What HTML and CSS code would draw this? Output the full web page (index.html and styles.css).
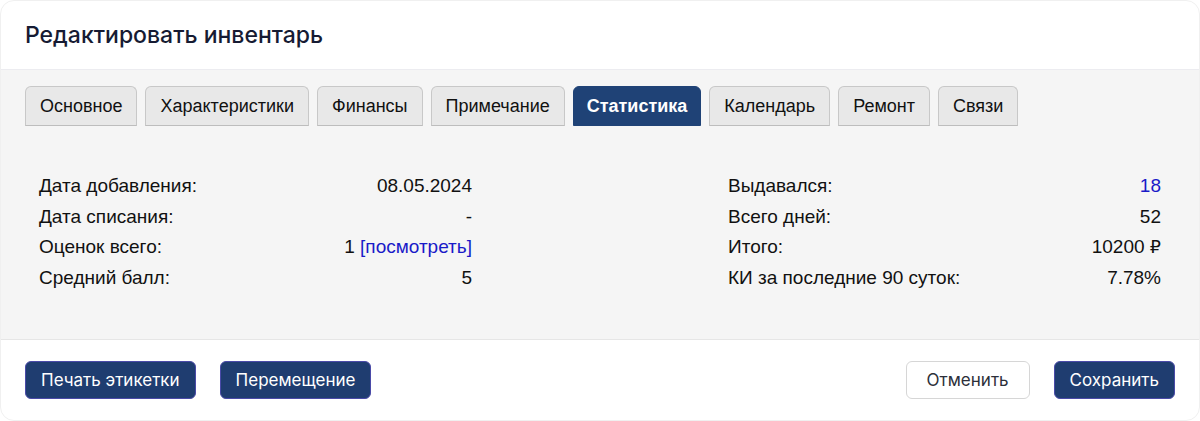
FILE: index.html
```html
<!DOCTYPE html>
<html lang="ru">
<head>
<meta charset="utf-8">
<link rel="stylesheet" href="styles.css">
</head>
<body>
<div class="modal">
  <div class="modal-header">
    <h1 class="title">Редактировать инвентарь</h1>
  </div>
  <div class="modal-body">
    <div class="tabs">
      <div class="tab">Основное</div>
      <div class="tab">Характеристики</div>
      <div class="tab">Финансы</div>
      <div class="tab">Примечание</div>
      <div class="tab active">Статистика</div>
      <div class="tab">Календарь</div>
      <div class="tab">Ремонт</div>
      <div class="tab">Связи</div>
    </div>
    <div class="stats">
      <div class="col">
        <div class="row"><span>Дата добавления:</span><span>08.05.2024</span></div>
        <div class="row"><span>Дата списания:</span><span>-</span></div>
        <div class="row"><span>Оценок всего:</span><span>1 <a class="link" href="#">[посмотреть]</a></span></div>
        <div class="row"><span>Средний балл:</span><span>5</span></div>
      </div>
      <div class="col">
        <div class="row"><span>Выдавался:</span><a class="link" href="#">18</a></div>
        <div class="row"><span>Всего дней:</span><span>52</span></div>
        <div class="row"><span>Итого:</span><span>10200 <span class="rub">₽</span></span></div>
        <div class="row"><span>КИ за последние 90 суток:</span><span>7.78%</span></div>
      </div>
    </div>
  </div>
  <div class="modal-footer">
    <div class="group">
      <button class="btn primary">Печать этикетки</button>
      <button class="btn primary">Перемещение</button>
    </div>
    <div class="group">
      <button class="btn secondary">Отменить</button>
      <button class="btn primary">Сохранить</button>
    </div>
  </div>
</div>
</body>
</html>
```

FILE: styles.css
```css
* { box-sizing: border-box; }
html, body { margin: 0; padding: 0; background: #fff; }
body { width: 1200px; height: 421px; overflow: hidden; }

.modal {
  width: 1200px;
  height: 421px;
  background: #fff;
  border-radius: 14px;
  display: flex;
  flex-direction: column;
  overflow: hidden;
  border: 1px solid #f0f0f0;
}

.modal-header {
  height: 69px;
  padding: 0 24px;
  display: flex;
  align-items: center;
  border-bottom: 1px solid #ececf0;
}
.title {
  margin: 0;
  font-family: Inter, "Liberation Sans", sans-serif;
  font-weight: 500;
  font-size: 23px;
  color: #161b33;
}

.modal-body {
  background: #f5f5f5;
  height: 270px;
  padding: 16px 24px 0;
  border-bottom: 1px solid #e6e6e6;
}

.tabs {
  display: flex;
  gap: 8px;
}
.tab {
  height: 40px;
  padding: 0 14px;
  display: flex;
  align-items: center;
  background: #e8e8e8;
  border: 1px solid #c8c8c8;
  border-bottom-color: #bdbdbd;
  border-radius: 6px 6px 0 0;
  font-family: "Liberation Sans", Arial, sans-serif;
  font-size: 18px;
  color: #111;
}
.tab.active {
  background: #1f4276;
  border-color: #1f4276;
  color: #fff;
  font-weight: bold;
  padding: 0 13px;
}

.stats {
  display: flex;
  justify-content: space-between;
  padding: 49px 14px 0;
}
.col {
  width: 433px;
  display: flex;
  flex-direction: column;
}
.row {
  display: flex;
  justify-content: space-between;
  align-items: baseline;
  height: 30.5px;
  font-family: "Liberation Sans", Arial, sans-serif;
  font-size: 19px;
  color: #111;
}
.rub {
  font-family: "DejaVu Sans", sans-serif;
  font-size: 17.5px;
}
.link {
  color: #1a1ac8;
  text-decoration: none;
}

.modal-footer {
  flex: 1;
  display: flex;
  justify-content: space-between;
  align-items: center;
  padding: 0 24px 1px 24px;
}
.group {
  display: flex;
  gap: 24px;
}
.btn {
  height: 38px;
  padding: 0 15px;
  border-radius: 6px;
  font-family: Inter, "Liberation Sans", sans-serif;
  font-size: 17px;
  cursor: pointer;
}
.btn.primary {
  background: #1f3d70;
  border: 1px solid #4a4aa8;
  color: #fff;
}
.btn.secondary {
  background: #fff;
  border: 1px solid #d6d6d6;
  color: #2c2f3a;
  padding: 0 20px;
}
```
